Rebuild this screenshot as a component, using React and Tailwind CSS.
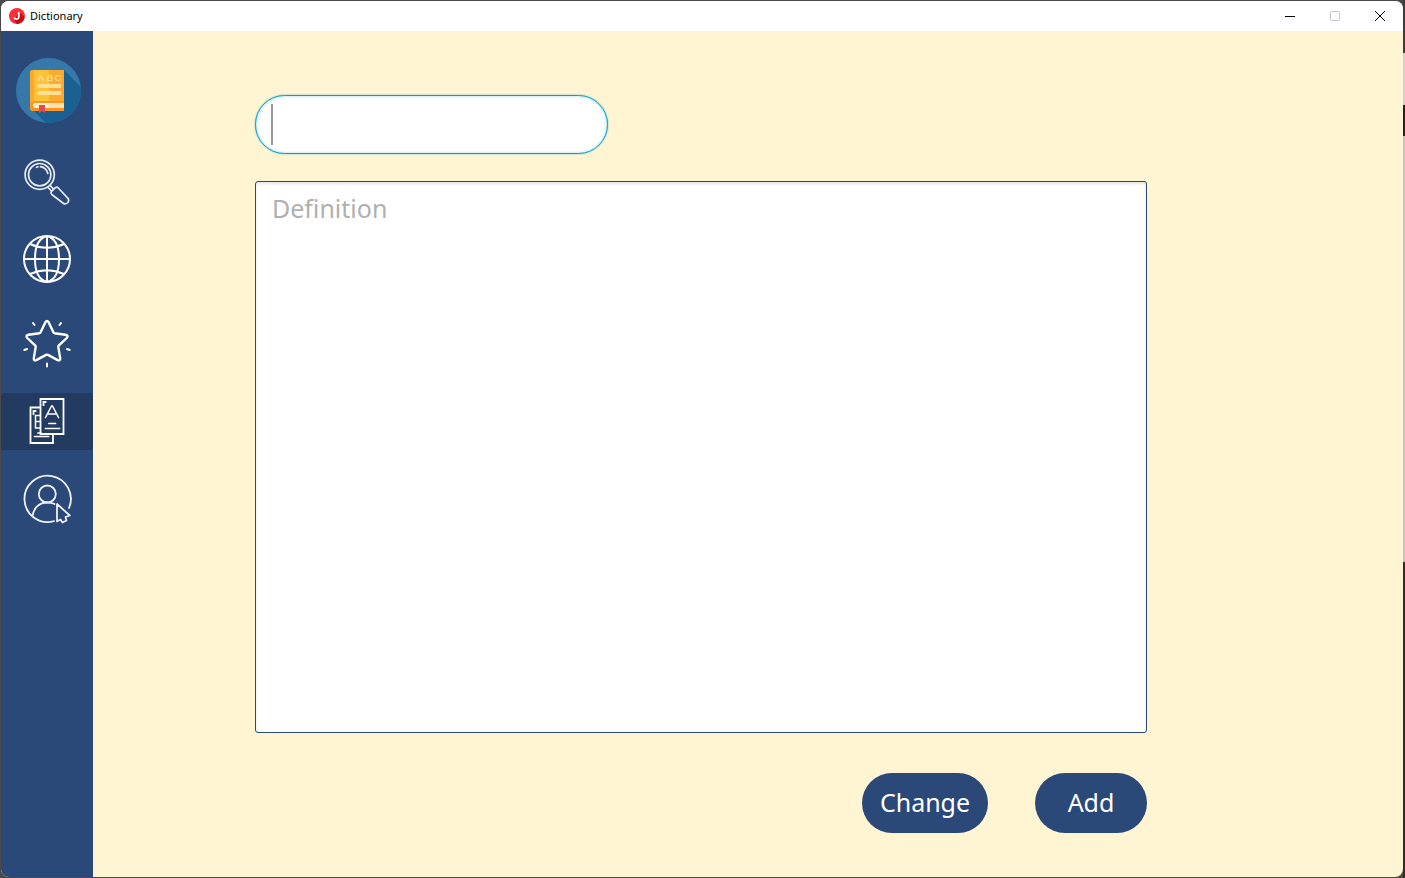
import React from "react";

const BookLogo = () => (
  <svg viewBox="0 0 65 65" className="size-[65px]" aria-label="Dictionary" role="img">
    <defs>
      <clipPath id="disc">
        <circle cx="32.5" cy="32.5" r="32.5" />
      </clipPath>
    </defs>
    <g clipPath="url(#disc)">
      <rect width="65" height="65" fill="#3678a8" />
      <path d="M48 12L65 29V65H30L14 49Z" fill="#1a6090" />
    </g>
    <path d="M16 12H31V53H17Q14 53 14 49V14Q14 12 16 12Z" fill="#ffa62c" />
    <path d="M18 12H33V43H18Z" fill="#ffc136" />
    <path d="M33 12H48V43H33Z" fill="#ffa92e" />
    <path d="M18 43H48V53H17Q14 53 14 48Q14 44 18 43Z" fill="#f99527" />
    <path d="M19 45H47V50H19Q17 50 17 47.500Q17 45 19 45Z" fill="#fff0cf" />
    <path d="M33 45H48V50H33Z" fill="#ffe1a8" />
    <path d="M21.500 26H45V30H21.500ZM21.500 33H45V37H21.500Z" fill="#ffe093" />
    <text x="21.500 30.500 38.500" y="23" fontFamily="Liberation Sans, sans-serif" fontWeight="700" fontSize="9.500" fill="#ffdd91">
      ABC
    </text>
    <path d="M23 47H29V55L26 53L23 55Z" fill="#e84755" />
  </svg>
);

const iconProps = {
  viewBox: "0 0 48 48",
  className: "size-12 overflow-visible",
  fill: "none",
  stroke: "#fff",
  strokeLinecap: "round",
  strokeLinejoin: "round",
  "aria-hidden": true,
};

const SearchIcon = () => (
  <svg {...iconProps} stroke="#e6ebf2" strokeWidth="1.700">
    <circle cx="16.700" cy="16.700" r="14.600" />
    <circle cx="16.700" cy="16.700" r="11.200" />
    <path d="M13.500 9.300L15 8.800M17.500 8.600Q23.500 9.500 24.800 15.500" />
    <path d="M27 27.300L30.500 31M24.500 29L28.500 33" />
    <path d="M28.300 33.600L32.400 29.700Q34 28.600 35.300 30L45 40.300Q46.500 42.300 44.800 44.500Q42.500 47 40.200 45.300L28.800 36.500Q27.300 34.800 28.300 33.600Z" />
  </svg>
);

const GlobeIcon = () => (
  <svg {...iconProps} strokeWidth="2">
    <circle cx="24" cy="24" r="23" />
    <path d="M24 1C16 3 12 12 12 24S16 45 24 47C32 45 36 36 36 24S32 3 24 1" />
    <path d="M24 1V47M1 24H47M7 9Q24 16.500 41 9M7 39Q24 31.500 41 39" />
  </svg>
);

const StarIcon = () => (
  <svg {...iconProps} strokeWidth="2.400">
    <path d="M22.400 2.200Q24 -.2 25.600 2.200L30.400 12.300Q30.700 13 31.500 13.200L42.500 14.800Q46 15.400 43.700 18L35.700 25.700Q35.200 26.200 35.300 27L37.200 38.100Q37.500 41.200 34.700 40.100L24.900 34.900Q24 34.500 23.100 34.900L13.300 40.100Q10.500 41.200 10.800 38.100L12.700 27Q12.800 26.200 12.300 25.700L4.300 18Q2 15.400 5.500 14.800L16.500 13.200Q17.300 13 17.600 12.300Z" />
    <path d="M10 3L11.500 5M38 3L36.500 5M1.300 30L4 29M46.700 30L44 29M24 43.500V46.500" strokeWidth="2" />
  </svg>
);

const CardsIcon = () => (
  <svg {...iconProps} strokeWidth="1.800" strokeLinecap="square" strokeLinejoin="miter">
    <path d="M17.500 2H40.500V37H17.500Z" />
    <path d="M17 10.500H7.500V46H30V37" />
    <path d="M20.500 8V5H22.500M10.500 17V14H12.500" />
    <path d="M22.500 20.500L28.500 9H29.500L35.500 20.500M25 17H33M26 26.500H32.500M22.500 31.500H36.500" strokeWidth="1.500" />
    <path d="M17 18.500H12.500V31H17M12.500 24.500H17M15 36H18M11.500 39.500H25.500" strokeWidth="1.500" />
  </svg>
);

const UserIcon = () => (
  <svg {...iconProps} viewBox="0 -1 48 48" strokeWidth="1.800" stroke="#eef2f7">
    <path d="M31 46.200A23.200 23.200 0 1 1 46 33" />
    <circle cx="24.300" cy="19" r="8.500" />
    <path d="M9.500 41.500C10.500 32.500 16.500 27.500 24.300 27.500Q28.500 27.500 31.500 29" />
    <path d="M34 29V46.500L37.500 44.500L39.500 47.500L43.500 45.500L42.500 42L46.800 40.500Z" />
  </svg>
);

const items = [
  { label: "Search", Icon: SearchIcon },
  { label: "Translate", Icon: GlobeIcon },
  { label: "Favourites", Icon: StarIcon, spaced: true },
  { label: "Edit words", Icon: CardsIcon, active: true },
  { label: "Account", Icon: UserIcon },
];

function TitleBar() {
  return (
    <header className="flex h-[30px] shrink-0 items-center justify-between bg-white">
      <div className="flex items-center gap-[5px] pl-2">
        <svg viewBox="0 0 16 16" className="size-4" aria-hidden="true">
          <circle cx="8" cy="8" r="8" fill="#f8303a" />
          <path d="M10.500 4L15.500 9A8 8 0 0 1 8 16L5 12Z" fill="#c80812" />
          <path d="M9.800 4V9A2.300 2.300 0 0 1 5.300 9.500" fill="none" stroke="#fff" strokeWidth="1.800" />
        </svg>
        <h1 className="text-[11px] leading-4 text-black">Dictionary</h1>
      </div>
      <div className="flex h-full text-black">
        <button aria-label="Minimize" className="flex w-[46px] items-center justify-center">
          <svg viewBox="0 0 12 12" className="size-3" stroke="currentColor">
            <path d="M1 6.500H11" />
          </svg>
        </button>
        <button aria-label="Maximize" disabled className="flex w-11 items-center justify-center text-[#c8c8c8]">
          <svg viewBox="0 0 12 12" className="size-3" fill="none" stroke="currentColor">
            <rect x="1.500" y="1.500" width="9" height="9" rx="1" />
          </svg>
        </button>
        <button aria-label="Close" className="flex w-[46px] items-center justify-center">
          <svg viewBox="0 0 12 12" className="size-3" stroke="currentColor">
            <path d="M1 1L11 11M11 1L1 11" />
          </svg>
        </button>
      </div>
    </header>
  );
}

export default function App() {
  return (
    <div className="h-screen bg-[#4a4a4a] bg-[linear-gradient(#3c3c3c_6%,#cfcfcf_6%_12%,#222_12%_15.5%,#c4c4c4_15.5%_64%,#2b2d30_64%)] bg-[length:2px_100%] bg-right bg-no-repeat pt-px pr-0.5 pb-px pl-px font-['Noto_Sans',sans-serif]">
      <div className="flex h-full flex-col overflow-hidden rounded-lg bg-[#fff5d3]">
        <TitleBar />
        <div className="flex min-h-0 flex-1">
          <aside className="flex w-[92px] shrink-0 flex-col bg-[#2b4978] pt-[27px]">
            <div className="pl-[15px]">
              <BookLogo />
            </div>
            <nav className="mt-[31px] flex flex-col gap-5">
              {items.map(({ label, Icon, active, spaced }) => (
                <button
                  key={label}
                  aria-label={label}
                  aria-current={active ? "page" : undefined}
                  className={`flex h-[57px] items-start justify-center rounded-[3px] pt-1 ${active ? "bg-[#233a61]" : ""} ${spaced ? "mt-2" : ""}`}
                >
                  <Icon />
                </button>
              ))}
            </nav>
          </aside>
          <main className="flex min-w-0 flex-1 flex-col pt-16 pr-[256px] pb-11 pl-[162px]">
            <div className="relative w-[353px]">
              <input
                type="text"
                aria-label="Word"
                className="block h-[59px] w-full rounded-full border border-[#039ed3] bg-white px-4 text-[25px] shadow-[0_0_2px_#039ed399,inset_0_0_3px_#039ed366] outline-none"
              />
              <span className="pointer-events-none absolute top-[9px] left-4 h-[41px] w-0.5 bg-[#999]" />
            </div>
            <textarea
              aria-label="Definition"
              placeholder="Definition"
              className="mt-[27px] block min-h-0 w-full flex-1 resize-none rounded-[3px] border border-[#2b4978] bg-white px-4 py-2 text-[25px] leading-9 shadow-[inset_0_2px_3px_#0000001a] outline-none placeholder:text-[#b0b0b0]"
            />
            <div className="mt-10 flex justify-end gap-[47px] text-[25px] text-white">
              <button className="h-[60px] w-[126px] rounded-full bg-[#2b4978]">Change</button>
              <button className="h-[60px] w-28 rounded-full bg-[#2b4978]">Add</button>
            </div>
          </main>
        </div>
      </div>
    </div>
  );
}
